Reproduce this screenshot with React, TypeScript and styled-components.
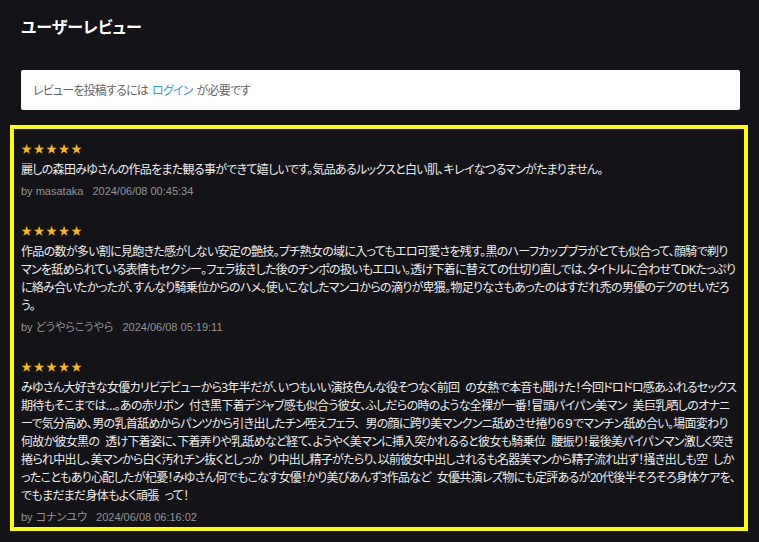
import styled, { createGlobalStyle } from "styled-components";

const GlobalStyle = createGlobalStyle`
    html, body {
        margin: 0;
        padding: 0;
        background: #131318;
    }
    body {
        font-family: "Noto Sans", "Noto Sans CJK JP", sans-serif;
        font-feature-settings: "palt";
        color: #e6e6e6;
    }
`;

const Page = styled.div`
    padding: 15px 11px 10px 10px;
`;

const Title = styled.h2`
    margin: 0 0 31px 11px;
    font-size: 16px;
    line-height: 24px;
    font-weight: bold;
    color: #ffffff;
`;

const LoginNotice = styled.div`
    margin: 0 8px 15px 11px;
    height: 40px;
    display: flex;
    align-items: center;
    padding: 0 12px;
    background: #ffffff;
    border-radius: 2px;
    font-size: 12px;
    letter-spacing: -0.8px;
    color: #666666;
`;

const LoginLink = styled.a`
    color: #3c9be6;
    text-decoration: none;
    margin: 0 4px;
    cursor: pointer;
`;

const ReviewBox = styled.section`
    border: 4px solid #ffff00;
    padding: 14px 7px 2px 7px;
    display: flex;
    flex-direction: column;
    gap: 26px;
`;

const ReviewItem = styled.article`
    display: flex;
    flex-direction: column;
`;

const Stars = styled.div`
    font-size: 11px;
    line-height: 12px;
    letter-spacing: 1.5px;
    color: #f8b81c;
    margin-bottom: 6px;
`;

const Body = styled.p`
    margin: 0;
    font-size: 12px;
    line-height: 18px;
    letter-spacing: -0.7px;
    word-spacing: 3.5px;
    color: #ececec;
    word-break: break-all;
`;

const Meta = styled.div`
    margin-top: 4px;
    font-family: "Liberation Sans", "Noto Sans CJK JP", sans-serif;
    font-size: 11px;
    line-height: 16px;
    color: #939393;
`;

const Date = styled.span`
    margin-left: 9px;
`;

type Review = { id: number; rating: number; body: string; author: string; date: string };

const reviews: Review[] = [
    {
        id: 1,
        rating: 5,
        body: "麗しの森田みゆさんの作品をまた観る事ができて嬉しいです。気品あるルックスと白い肌、キレイなつるマンがたまりません。",
        author: "masataka",
        date: "2024/06/08 00:45:34",
    },
    {
        id: 2,
        rating: 5,
        body: "作品の数が多い割に見飽きた感がしない安定の艶技。プチ熟女の域に入ってもエロ可愛さを残す。黒のハーフカップブラがとても似合って、顔騎で剃りマンを舐められている表情もセクシー。フェラ抜きした後のチンポの扱いもエロい。透け下着に替えての仕切り直しでは、タイトルに合わせてDKたっぷりに絡み合いたかったが、すんなり騎乗位からのハメ。使いこなしたマンコからの滴りが卑猥。物足りなさもあったのはすだれ禿の男優のテクのせいだろう。",
        author: "どうやらこうやら",
        date: "2024/06/08 05:19:11",
    },
    {
        id: 3,
        rating: 5,
        body: "みゆさん大好きな女優カリビデビューから3年半だが、いつもいい演技色んな役そつなく前回 の女熱で本音も聞けた！今回ドロドロ感あふれるセックス期待もそこまでは…。あの赤リボン 付き黒下着デジャブ感も似合う彼女、ふしだらの時のような全裸が一番！冒頭パイパン美マン 美巨乳晒しのオナニーで気分高め、男の乳首舐めからパンツから引き出したチン咥えフェラ、 男の顔に跨り美マンクンニ舐めさせ捲り６９でマンチン舐め合い。場面変わり何故か彼女黒の 透け下着姿に、下着弄りや乳舐めなど経て、ようやく美マンに挿入突かれるると彼女も騎乗位 腰振り！最後美パイパンマン激しく突き捲られ中出し、美マンから白く汚れチン抜くとしっか り中出し精子がたらり、以前彼女中出しされるも名器美マンから精子流れ出ず！掻き出しも空 しかったこともあり心配したが杞憂！みゆさん何でもこなす女優！かり美びあんず3作品など 女優共演レズ物にも定評あるが20代後半そろそろ身体ケアを、でもまだまだ身体もよく頑張 って！",
        author: "コナンユウ",
        date: "2024/06/08 06:16:02",
    },
];

export default function App() {
    return (
        <>
            <GlobalStyle/>
            <Page>
                <Title>ユーザーレビュー</Title>
                <LoginNotice>
                    レビューを投稿するには<LoginLink>ログイン</LoginLink>が必要です
                </LoginNotice>
                <ReviewBox>
                    {reviews.map((r) => (
                        <ReviewItem key={r.id}>
                            <Stars>{"★".repeat(r.rating)}</Stars>
                            <Body>{r.body}</Body>
                            <Meta>
                                by {r.author}<Date>{r.date}</Date>
                            </Meta>
                        </ReviewItem>
                    ))}
                </ReviewBox>
            </Page>
        </>
    );
}
